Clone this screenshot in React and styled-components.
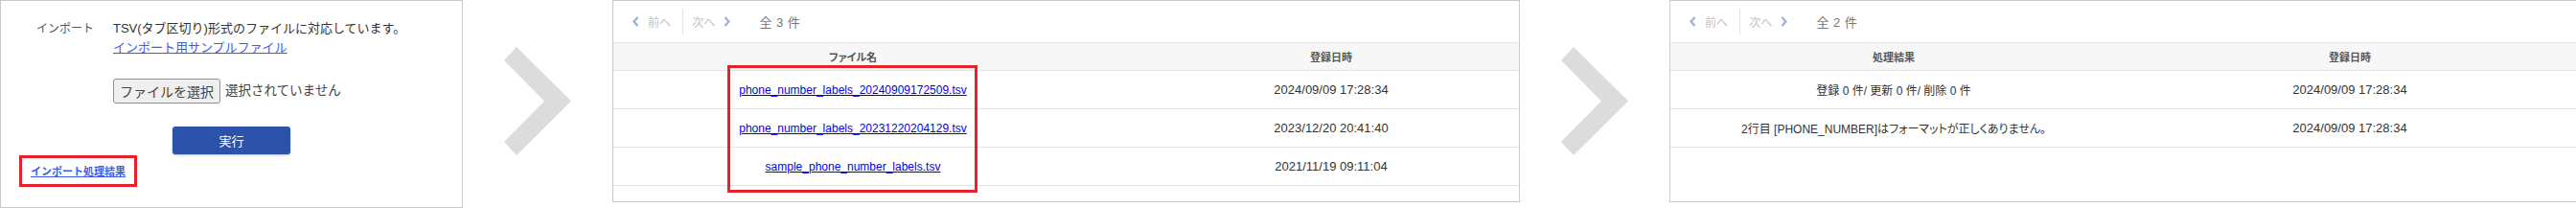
import React from "react"
import styled, { createGlobalStyle } from "styled-components"

const GlobalStyle = createGlobalStyle`
  html, body {
    margin: 0;
    padding: 0;
    background: #fff;
  }
  body {
    font-family: "Liberation Sans", "Noto Sans CJK JP", sans-serif;
    color: #333;
  }
`

const Strip = styled.div`
  display: flex;
  align-items: flex-start;
  gap: 42px;
  width: 2688px;
  height: 217px;
  overflow: hidden;
`

/* ---------- step 1 : import form ---------- */

const ImportPanel = styled.section`
  box-sizing: border-box;
  flex: none;
  width: 483px;
  height: 217px;
  padding-top: 19px;
  border: 1px solid #c9c9c9;
`

const FormRow = styled.div`
  display: grid;
  grid-template-columns: 117px 1fr;
`

const FormLabel = styled.div`
  padding: 1px 20px 0 0;
  text-align: right;
  font-size: 12px;
  line-height: 18px;
  color: #555;
`

const FormBody = styled.div`
  font-size: 13px;
  line-height: 20px;
  color: #333;
`

const Notice = styled.div`
  color: #333;
`

const SampleLink = styled.a`
  color: #3a5ee8;
  text-decoration: underline;
`

const FilePicker = styled.div`
  display: flex;
  align-items: center;
  gap: 5px;
  margin-top: 22px;
`

const FileButton = styled.button`
  box-sizing: border-box;
  width: 112px;
  height: 26px;
  padding: 0;
  border: 1px solid #8f8f8f;
  border-radius: 3px;
  background: #efefef;
  font-family: inherit;
  font-size: 14px;
  color: #444;
`

const FileStatus = styled.span`
  font-size: 13.5px;
  color: #444;
`

const RunButton = styled.button`
  display: block;
  width: 123px;
  height: 29px;
  margin: 24px auto 0;
  border: none;
  border-radius: 3px;
  background: #2c52a9;
  box-shadow: 0 1px 2px rgba(0, 0, 0, 0.25);
  color: #fff;
  font-family: inherit;
  font-size: 13px;
`

const Highlight = styled.div`
  display: inline-block;
  margin: 1px 0 0 19px;
  padding: 6px 9px;
  border: 3px solid #e8202a;
  line-height: 14px;
`

const ResultLink = styled.a`
  font-size: 11px;
  font-weight: 700;
  color: #3a5ee8;
  text-decoration: underline;
`

/* ---------- big gray arrow ---------- */

const Arrow = styled.svg`
  flex: none;
  margin-top: 49px;
`

const StepArrow = () => (
  <Arrow width="72" height="113" viewBox="0 0 72 113">
    <polygon points="14,0 71,56.5 14,113 1,99 43,56.5 1,14" fill="#dcdcdc" />
  </Arrow>
)

/* ---------- list panels ---------- */

const ListPanel = styled.section`
  box-sizing: border-box;
  position: relative;
  flex: none;
  width: ${(p) => p.$width}px;
  height: 211px;
  border: 1px solid #c9c9c9;
  overflow: hidden;
  font-feature-settings: "palt";
`

const Pager = styled.div`
  box-sizing: border-box;
  display: flex;
  align-items: center;
  height: 44px;
  padding-left: 20px;
  border-bottom: 1px solid #e4e4e4;
`

const PagerStep = styled.span`
  display: flex;
  align-items: center;
  gap: 9px;
  font-size: 12px;
  color: #c2c2c2;
`

const PagerDivider = styled.span`
  width: 1px;
  height: 27px;
  margin: 0 9px 0 12px;
  background: #e2e2e2;
`

const PagerCount = styled.span`
  margin-left: 30px;
  font-size: 13px;
  color: #777;
  word-spacing: 1px;
`

const Caret = ({ dir }) => (
  <svg width="7" height="11" viewBox="0 0 7 11">
    <polyline
      points={dir === "left" ? "5.5,1 1.5,5.5 5.5,10" : "1.5,1 5.5,5.5 1.5,10"}
      fill="none"
      stroke="#9eaddb"
      strokeWidth="2.2"
    />
  </svg>
)

const HeadRow = styled.div`
  box-sizing: border-box;
  display: grid;
  grid-template-columns: ${(p) => p.$cols};
  align-items: center;
  height: 29px;
  border-bottom: 1px solid #e4e4e4;
  background: #f7f7f7;
  font-size: 11px;
  font-weight: 700;
  color: #555;
  text-align: center;
`

const BodyRow = styled.div`
  box-sizing: border-box;
  display: grid;
  grid-template-columns: ${(p) => p.$cols};
  align-items: center;
  height: 40px;
  border-bottom: 1px solid #e4e4e4;
  font-size: 12px;
  color: #333;
  text-align: center;
`

const DateCell = styled.span`
  font-size: 13px;
`

const FileLink = styled.a`
  color: #0000ee;
  text-decoration: underline;
  font-size: 12px;
`

const Marker = styled.div`
  box-sizing: border-box;
  position: absolute;
  left: 119px;
  top: 67px;
  width: 261px;
  height: 133px;
  border: 3px solid #e8202a;
`

const Pagination = ({ total }) => (
  <Pager>
    <PagerStep>
      <Caret dir="left" />
      前へ
    </PagerStep>
    <PagerDivider />
    <PagerStep>
      次へ
      <Caret dir="right" />
    </PagerStep>
    <PagerCount>全 {total} 件</PagerCount>
  </Pager>
)

const files = [
  { name: "phone_number_labels_20240909172509.tsv", date: "2024/09/09 17:28:34" },
  { name: "phone_number_labels_20231220204129.tsv", date: "2023/12/20 20:41:40" },
  { name: "sample_phone_number_labels.tsv", date: "2021/11/19 09:11:04" },
]

const results = [
  { text: "登録 0 件/ 更新 0 件/ 削除 0 件", date: "2024/09/09 17:28:34" },
  { text: "2行目 [PHONE_NUMBER]はフォーマットが正しくありません。", date: "2024/09/09 17:28:34" },
]

const fileCols = "500px 498px"
const resultCols = "466px 486px"

const App = () => {
  return (
    <>
      <GlobalStyle />
      <Strip lang="ja">
        <ImportPanel>
          <FormRow>
            <FormLabel>インポート</FormLabel>
            <FormBody>
              <Notice>TSV(タブ区切り)形式のファイルに対応しています。</Notice>
              <SampleLink href="#">インポート用サンプルファイル</SampleLink>
              <FilePicker>
                <FileButton>ファイルを選択</FileButton>
                <FileStatus>選択されていません</FileStatus>
              </FilePicker>
            </FormBody>
          </FormRow>
          <RunButton>実行</RunButton>
          <Highlight>
            <ResultLink href="#">インポート処理結果</ResultLink>
          </Highlight>
        </ImportPanel>

        <StepArrow />

        <ListPanel $width={947}>
          <Pagination total={3} />
          <HeadRow $cols={fileCols}>
            <span>ファイル名</span>
            <span>登録日時</span>
          </HeadRow>
          {files.map((f) => (
            <BodyRow key={f.name} $cols={fileCols}>
              <span>
                <FileLink href="#">{f.name}</FileLink>
              </span>
              <DateCell>{f.date}</DateCell>
            </BodyRow>
          ))}
          <Marker />
        </ListPanel>

        <StepArrow />

        <ListPanel $width={960}>
          <Pagination total={2} />
          <HeadRow $cols={resultCols}>
            <span>処理結果</span>
            <span>登録日時</span>
          </HeadRow>
          {results.map((r, i) => (
            <BodyRow key={i} $cols={resultCols}>
              <span>{r.text}</span>
              <DateCell>{r.date}</DateCell>
            </BodyRow>
          ))}
        </ListPanel>
      </Strip>
    </>
  )
}

export default App
